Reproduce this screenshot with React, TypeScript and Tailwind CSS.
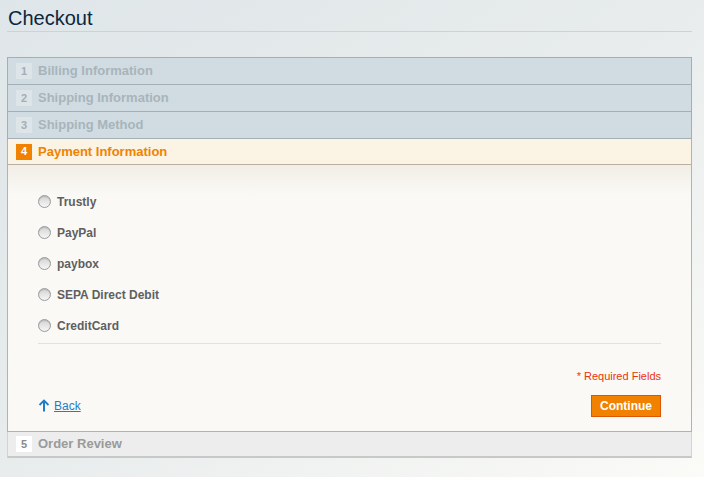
import React from 'react';

interface Step {
  num: number;
  title: string;
}

const doneSteps: Step[] = [
  { num: 1, title: 'Billing Information' },
  { num: 2, title: 'Shipping Information' },
  { num: 3, title: 'Shipping Method' },
];

const methods = ['Trustly', 'PayPal', 'paybox', 'SEPA Direct Debit', 'CreditCard'];

const Radio: React.FC = () => (
  <span className="inline-block w-[13px] h-[13px] rounded-full border border-[#9a9a9a] bg-gradient-to-b from-[#d4d4d4] to-[#f6f6f6] shadow-[inset_0_1px_1px_rgba(0,0,0,0.15)]" />
);

export default function App() {
  return (
    <div className="w-[704px] min-h-[477px] bg-gradient-to-br from-[#dfe6e9] via-[#e8ecec] to-[#fbfbf8] font-['Arial','Liberation_Sans',sans-serif]">
      <div className="mx-[7px] pt-[6px] border-b border-[#cdd3d5] w-[685px]">
        <h1 className="pl-px text-[20px] leading-[24px] pb-[1px] text-[#0a263c] font-normal">Checkout</h1>
      </div>

      <ol className="mx-[7px] mt-[25px] w-[685px]">
        {doneSteps.map((s, i) => (
          <li
            key={s.num}
            className={`flex items-center h-[27px] border-x border-b border-[#a4afb5] bg-[#d0dce2] ${i === 0 ? 'border-t h-[28px]' : ''}`}
          >
            <span className="ml-[8px] w-[16px] h-[16px] flex items-center justify-center bg-[#dde5e9] text-[#a3afb5] text-[11px] font-bold">
              {s.num}
            </span>
            <span className="ml-[6px] text-[13px] font-bold text-[#a8b4ba]">{s.title}</span>
          </li>
        ))}

        <li className="border-x border-b border-[#bcb0a2]">
          <div className="flex items-center h-[26px] border-b border-[#bcb0a2] bg-[#fbf3e4]">
            <span className="ml-[8px] w-[16px] h-[16px] flex items-center justify-center bg-[#f18200] text-white text-[11px] font-bold">
              4
            </span>
            <span className="ml-[6px] text-[13px] font-bold text-[#f18200]">Payment Information</span>
          </div>

          <div className="bg-gradient-to-b from-[#f2eee6] to-[#faf9f6] to-[30px] px-[30px] pt-[21px] pb-[14px]">
            <ul>
              {methods.map((m) => (
                <li key={m} className="flex items-center h-[31px] gap-[6px]">
                  <Radio />
                  <span className="text-[12px] font-bold text-[#5f5f5f]">{m}</span>
                </li>
              ))}
            </ul>
            <div className="mt-[2px] border-t border-[#e3e1dd]" />
            <p className="mt-[25px] text-right text-[11px] leading-[14px] text-[#eb340a]">* Required Fields</p>
            <div className="mt-[12px] flex items-center justify-between">
              <a href="#" className="flex items-center gap-[4px] text-[12px] text-[#1e7ec8] underline">
                <svg width="12" height="13" viewBox="0 0 12 13" className="mt-[-1px]">
                  <path d="M6 1.5 L6 12.5" stroke="#1e7ec8" strokeWidth="2" />
                  <path d="M1.5 6 L6 1.5 L10.5 6" stroke="#1e7ec8" strokeWidth="1.8" fill="none" />
                </svg>
                Back
              </a>
              <button className="h-[22px] px-[8px] border border-[#de5400] bg-[#f18200] text-white text-[12px] font-bold leading-none">
                Continue
              </button>
            </div>
          </div>
        </li>

        <li className="flex items-center h-[26px] border-x border-b-2 border-[#c8c8c8] border-x-[#d3d3d3] bg-[#ededed]">
          <span className="ml-[8px] w-[16px] h-[16px] flex items-center justify-center bg-white text-[#8a8a8a] text-[11px] font-bold">
            5
          </span>
          <span className="ml-[6px] text-[13px] font-bold text-[#9a9a9a]">Order Review</span>
        </li>
      </ol>
    </div>
  );
}
